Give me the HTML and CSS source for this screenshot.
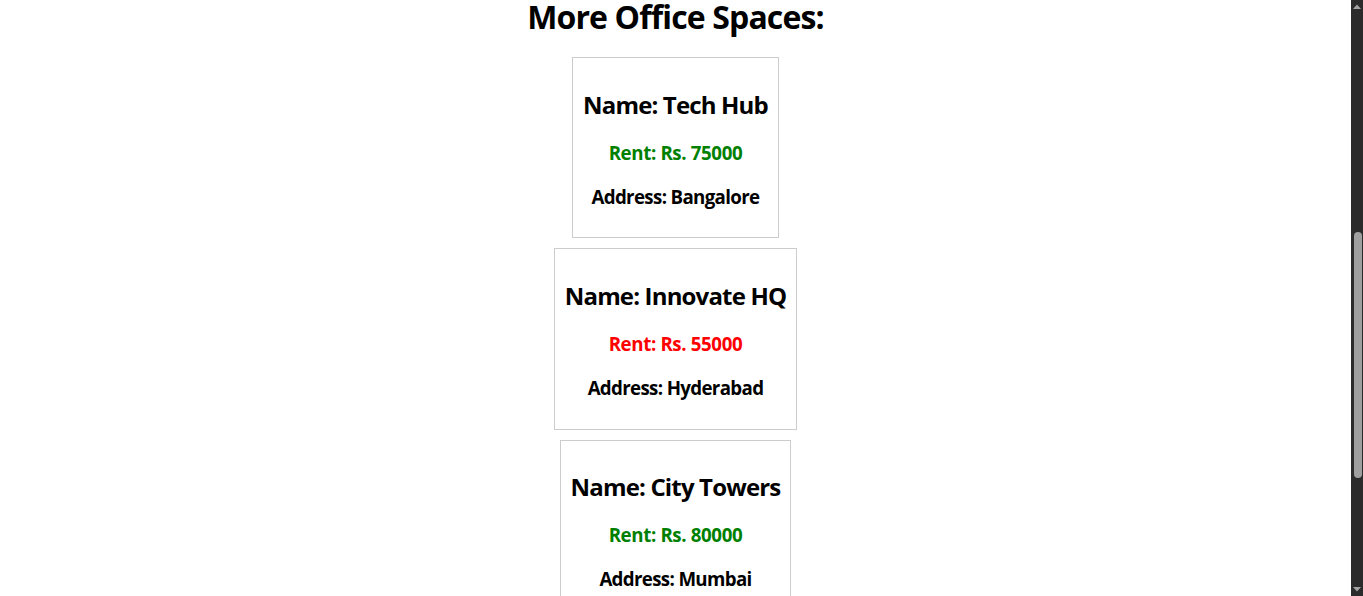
FILE: index.html
```html
<!DOCTYPE html>
<html lang="en">
<head>
<meta charset="utf-8">
<title>Office Spaces</title>
<link rel="stylesheet" href="styles.css">
</head>
<body>
<main class="page">
  <h1 class="title">More Office Spaces:</h1>
  <div class="card">
    <h2 class="card-name">Name: Tech Hub</h2>
    <h3 class="rent rent-high">Rent: Rs. 75000</h3>
    <h3 class="address">Address: Bangalore</h3>
  </div>
  <div class="card">
    <h2 class="card-name">Name: Innovate HQ</h2>
    <h3 class="rent rent-low">Rent: Rs. 55000</h3>
    <h3 class="address">Address: Hyderabad</h3>
  </div>
  <div class="card">
    <h2 class="card-name">Name: City Towers</h2>
    <h3 class="rent rent-high">Rent: Rs. 80000</h3>
    <h3 class="address">Address: Mumbai</h3>
  </div>
</main>
<div class="scrollbar" aria-hidden="true">
  <svg class="sb-arrow" width="12" height="12" viewBox="0 0 12 12"><path d="M2 9 L6 4.5 L10 9 Z" fill="#a3a3a3"/></svg>
  <div class="sb-track"><div class="sb-thumb"></div></div>
  <svg class="sb-arrow" width="12" height="12" viewBox="0 0 12 12"><path d="M2 3 L6 7.5 L10 3 Z" fill="#a3a3a3"/></svg>
</div>
</body>
</html>
```
FILE: styles.css
```css
html, body {
  margin: 0;
  padding: 0;
  background: #fff;
}
body {
  font-family: "Open Sans", "Noto Sans", sans-serif;
  color: #000;
  overflow: hidden;
}
.page {
  width: 1351px;
  text-align: center;
  padding-bottom: 40px;
}
.title {
  font-size: 32px;
  font-weight: 700;
  line-height: 33px;
  letter-spacing: -0.027em;
  margin: 0 0 24px;
}
.card {
  width: fit-content;
  margin: 0 auto 10px;
  padding: 10px;
  border: 1px solid #ccc;
  text-align: center;
}
.card-name {
  font-size: 24px;
  font-weight: 700;
  line-height: 32px;
  letter-spacing: -0.035em;
  margin: 19.92px 0;
  padding-top: 1px;
  margin-bottom: 18.92px;
}
.rent, .address {
  font-size: 18.72px;
  font-weight: 700;
  line-height: 25px;
  letter-spacing: -0.035em;
  margin: 18.72px 0;
}
.rent {
  letter-spacing: -0.02em;
}
.rent-high { color: #008000; }
.rent-low { color: #ff0000; }
.scrollbar {
  position: fixed;
  top: 0;
  right: 0;
  bottom: 0;
  width: 12px;
  background: #2b2b2b;
  display: flex;
  flex-direction: column;
}
.sb-arrow {
  display: block;
  flex: none;
}
.sb-track {
  flex: 1;
  padding-top: 220px;
}
.sb-thumb {
  width: 8px;
  height: 246px;
  margin-left: 3px;
  background: #9f9f9f;
  border-radius: 4px;
}
```
